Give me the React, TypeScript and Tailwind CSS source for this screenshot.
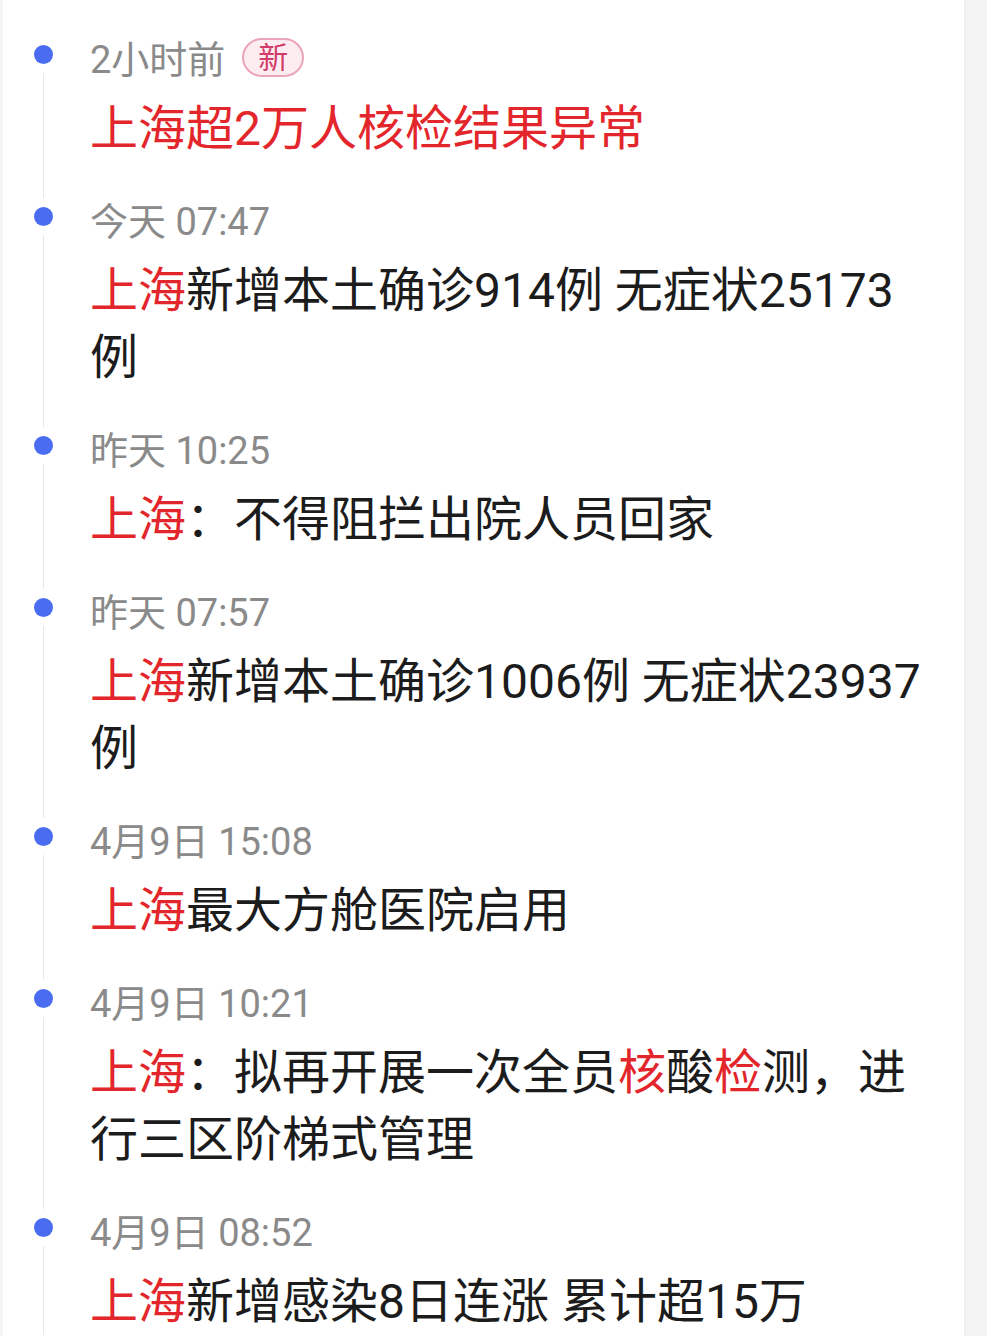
import React from "react";

type Seg = { t: string; red?: boolean };
type Item = { time: string; badge?: boolean; title: Seg[] };

const items: Item[] = [
  { time: "2小时前", badge: true, title: [{ t: "上海超2万人核检结果异常", red: true }] },
  { time: "今天 07:47", title: [{ t: "上海", red: true }, { t: "新增本土确诊914例 无症状25173例" }] },
  { time: "昨天 10:25", title: [{ t: "上海", red: true }, { t: "：不得阻拦出院人员回家" }] },
  { time: "昨天 07:57", title: [{ t: "上海", red: true }, { t: "新增本土确诊1006例 无症状23937例" }] },
  { time: "4月9日 15:08", title: [{ t: "上海", red: true }, { t: "最大方舱医院启用" }] },
  {
    time: "4月9日 10:21",
    title: [
      { t: "上海", red: true },
      { t: "：拟再开展一次全员" },
      { t: "核", red: true },
      { t: "酸" },
      { t: "检", red: true },
      { t: "测，进行三区阶梯式管理" },
    ],
  },
  { time: "4月9日 08:52", title: [{ t: "上海", red: true }, { t: "新增感染8日连涨 累计超15万" }] },
];

export default function App() {
  return (
    <div
      className="flex min-h-screen w-full bg-white"
      style={{ fontFamily: 'Roboto, "Noto Sans CJK SC", sans-serif' }}
    >
      <main className="flex flex-1 flex-col border-l-[3px] border-[#f6f6f6]">
        {items.map((it, i) => (
          <div key={i} className="flex">
            <div className="flex w-[80px] flex-col items-center">
              <div className={`h-[36px] w-px ${i === 0 ? "bg-transparent" : "bg-[#e8e8e8]"}`} />
              <div className="mt-[9px] h-[19px] w-[19px] rounded-full bg-[#4a6cf0]" />
              <div className="mt-[9px] w-px flex-1 bg-[#e8e8e8]" />
            </div>
            <div className="ml-[7px] flex-1 pr-[32px] pt-[36px]">
              <div className="flex h-[48px] items-center">
                <span className="text-[38px] leading-[48px] text-[#8a8a8a]">{it.time}</span>
                {it.badge && (
                  <span className="mb-[5px] ml-[17px] flex h-[39px] w-[62px] items-center justify-center rounded-full border-2 border-[#eba5b8] bg-[#fdedf1] text-[30px] leading-none text-[#d23c6a]">
                    新
                  </span>
                )}
              </div>
              <p className="mt-[11px] text-[48px] leading-[67px] text-[#1c1c1c]">
                {it.title.map((s, j) => (
                  <span key={j} className={s.red ? "text-[#e3262b]" : ""}>
                    {s.t}
                  </span>
                ))}
              </p>
            </div>
          </div>
        ))}
      </main>
      <aside className="w-[23px] bg-[#f4f4f4] shadow-[inset_2px_0_3px_rgba(0,0,0,0.03)]" />
    </div>
  );
}
